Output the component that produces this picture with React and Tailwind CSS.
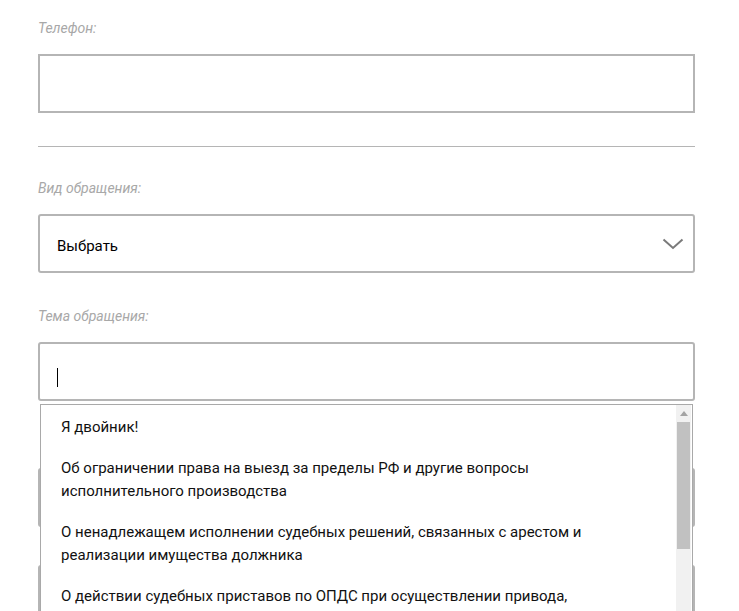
import React from "react";

export default function App() {
  const items = [
    "Я двойник!",
    "Об ограничении права на выезд за пределы РФ и другие вопросы исполнительного производства",
    "О ненадлежащем исполнении судебных решений, связанных с арестом и реализации имущества должника",
    "О действии судебных приставов по ОПДС при осуществлении привода, обеспечении безопасности в судах",
  ];
  return (
    <div className="w-[739px] h-[611px] overflow-hidden bg-white" style={{ fontFamily: "Roboto, 'Liberation Sans', sans-serif" }}>
      <div className="ml-[38px] mr-[44px] pt-[19px]">
        <div className="text-[14px] italic text-[#a8a8a8] leading-[18px]">Телефон:</div>
        <div className="mt-[17px] h-[59px] border-2 border-[#b5b5b5]"></div>
        <div className="mt-[33px] h-px bg-[#b5b5b5]"></div>

        <div className="mt-[32px] text-[14px] italic text-[#a8a8a8] leading-[18px]">Вид обращения:</div>
        <div className="mt-[17px] h-[59px] border-2 border-[#b5b5b5] rounded-[3px] flex items-center justify-between pl-[17px] pr-[9px]">
          <span className="text-[15px] text-black mt-[6px]">Выбрать</span>
          <svg width="22" height="12" viewBox="0 0 22 12" fill="none">
            <path d="M1.5 1.5 L11 10 L20.5 1.5" stroke="#7a7a7a" strokeWidth="2" />
          </svg>
        </div>

        <div className="mt-[34px] text-[14px] italic text-[#a8a8a8] leading-[18px]">Тема обращения:</div>
        <div className="relative">
          <div className="mt-[17px] h-[59px] border-2 border-[#b5b5b5] rounded-[3px] flex items-center pl-[17px]">
            <div className="w-px h-[19px] bg-black mt-[12px]"></div>
          </div>

          <div className="mt-[67px] h-[59px] border-2 border-[#b5b5b5] rounded-[3px]"></div>
          <div className="mt-[38px] h-[59px] border-2 border-[#b5b5b5] rounded-[3px]"></div>

          <div className="absolute left-[2px] right-[2px] top-[62px] h-[260px] bg-white border border-[#a9a9a9] flex">
            <div className="flex-1 pl-[20px] pt-[2px]">
              {items.map((t, i) => (
                <div key={i} className="py-[9px] text-[15px] leading-[23px] text-[#111] pr-[40px]">{t}</div>
              ))}
            </div>
            <div className="w-[15px] bg-[#f1f1f1] flex flex-col items-center mr-[1px]">
              <svg width="8" height="5" viewBox="0 0 8 5" className="mt-[6px]">
                <path d="M0 5 L4 0 L8 5 Z" fill="#a3a3a3" />
              </svg>
              <div className="mt-[6px] w-[13px] h-[127px] bg-[#c1c1c1]"></div>
            </div>
          </div>
        </div>
      </div>
    </div>
  );
}
